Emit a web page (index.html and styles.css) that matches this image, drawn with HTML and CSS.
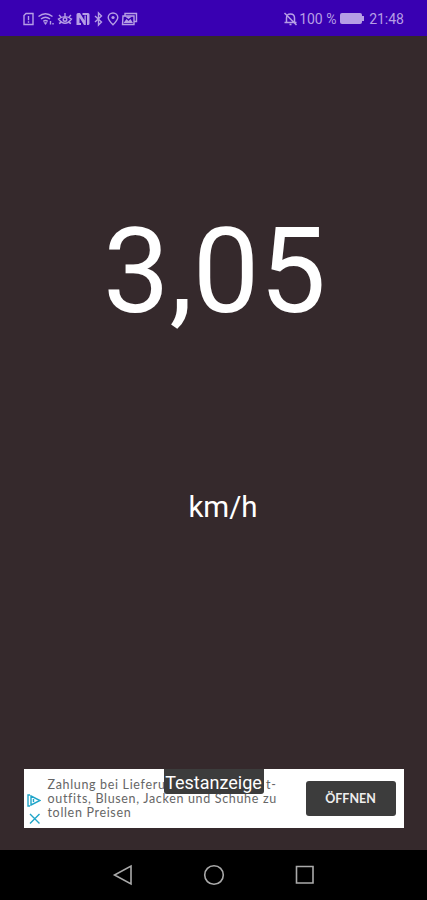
FILE: index.html
```
<!DOCTYPE html>
<html lang="de">
<head>
<meta charset="UTF-8">
<meta name="viewport" content="width=device-width, initial-scale=1.0">
<title>Tacho</title>
<link rel="stylesheet" href="styles.css">
</head>
<body>

<div class="screen">
  <header class="statusbar">
    <svg class="status-icons" width="116" height="16" viewBox="0 0 116 16">
      <!-- sim -->
      <path d="M4 2.500h7v11H2V4.500z"/>
      <path d="M6.500 5v4.200M6.500 10.300v1.500"/>
      <!-- wifi -->
      <path d="M16.500 5.500q7-5.500 14 0M19 8q4.500-3.500 9 0M21.300 10.300q2.200-1.500 4.400 0"/>
      <path class="fill" d="M21.500 11.300h4l-2 2.700z"/>
      <path d="M28.500 10v3.500M31 12v1.500"/>
      <!-- eye -->
      <path d="M36.500 8q6.500-4.800 13 0-6.500 8.500-13 0zM37 4l2 2M43 2v3M49 4l-2 2M37 12.500l2-1M49 12.500l-2-1"/>
      <circle cx="43" cy="8.500" r="1.800"/>
      <!-- nfc -->
      <path class="fill" d="M54.500 3.500Q54.500 2 56 2h2l4.500 7.500V4.500h1.300V14h-1.800L57.500 6.500V12h1.500v2h-4.500z"/>
      <path class="fill" d="M60.500 2H66q1.500 0 1.500 1.500v9q0 1.500-1.500 1.500h-1V4h-4.500z"/>
      <!-- bluetooth -->
      <path d="M73 5l6.500 6-3 3V2l3 3-6.500 6"/>
      <!-- location -->
      <path d="M91 13.800q-4.800-4.800-4.800-7.300a4.800 4.500 0 0 1 9.600 0q0 2.500-4.800 7.300z"/>
      <circle class="fill" cx="91" cy="6.500" r="1.600"/>
      <!-- gallery -->
      <path d="M103 4.500V2.500h11.500v8h-2M101 5h11v8.500H100.500z"/>
      <path class="fill" d="M101.500 12l3-4 2 2 2-2 2.500 4zM103 5.500h7l-3.500 2.500z"/>
    </svg>
    <div class="status-right">
      <svg class="bell" width="15" height="16" viewBox="0 0 15 16">
        <path d="M3.500 11.500V7q0-4 4-4t4 4v4.500M1.500 11.500h12M6.500 13.500h2M1.500 2l12 12"/>
      </svg>
      <span class="percent">100 %</span>
      <span class="battery"></span>
      <span class="clock">21:48</span>
    </div>
  </header>

  <main class="content">
    <div class="speed">3,05</div>
    <div class="unit">km/h</div>

    <div class="ad">
      <svg class="ad-icons" width="15" height="36" viewBox="0 0 15 36">
        <path d="M4 3H2v11h2M5 4v9l9-4.500zM7.500 7v3"/>
        <path d="M4 22l9.500 9.500M13.500 22L4 31.500"/>
      </svg>
      <p class="ad-text">
        <span class="line first"><span>Zahlung bei Lieferu</span><span>t-</span></span>
        <span class="line">outfits, Blusen, Jacken und Schuhe zu</span>
        <span class="line">tollen Preisen</span>
      </p>
      <button class="ad-button">ÖFFNEN</button>
      <span class="ad-label">Testanzeige</span>
    </div>
  </main>

  <nav class="navbar">
    <svg width="22" height="22" viewBox="0 0 22 22"><path d="M19 2v18L2.500 11z"/></svg>
    <svg width="22" height="22" viewBox="0 0 22 22"><circle cx="11" cy="11" r="9.300"/></svg>
    <svg width="22" height="22" viewBox="0 0 22 22"><path d="M2.500 2.500h16.500v16.500H2.500z"/></svg>
  </nav>
</div>

</body>
</html>
```
FILE: styles.css
```
* { box-sizing: border-box; }
body { margin: 0; background-color: #35292c; font-family: Roboto, "Liberation Sans", sans-serif; }
svg { display: block; fill: none; stroke: currentColor; }
.fill { fill: currentColor; stroke: none; }
.screen { display: flex; flex-direction: column; width: 427px; height: 900px; overflow: hidden; }

.statusbar {
  display: flex;
  justify-content: space-between;
  align-items: center;
  height: 36px;
  padding: 1px 23px 0 22px;
  background-color: #3900b2;
  color: #b69ee5;
}
.status-icons { stroke-width: 1.400; }
.status-right { display: flex; align-items: center; font-size: 14px; line-height: 16px; }
.bell { margin-right: 1px; stroke-width: 1.500; }
.percent { width: 38px; white-space: nowrap; }
.battery { position: relative; width: 22px; height: 11px; margin: 0 7px 0 3px; background-color: #b69ee5; border-radius: 2px; }
.battery::after { content: ""; position: absolute; right: -2px; top: 3px; width: 2px; height: 5px; background-color: #b69ee5; }

.content {
  display: flex;
  flex-direction: column;
  align-items: center;
  flex: 1;
  color: #fff;
}
.speed { margin-top: 165px; padding-left: 2px; font-size: 118.500px; line-height: 142px; }
.unit { margin-top: 146px; padding-left: 19px; font-size: 29.500px; line-height: 36px; }

.ad {
  position: relative;
  display: flex;
  align-items: center;
  width: 380px;
  height: 59px;
  margin: auto 0 22px;
  padding: 0 8px 0 2px;
  background-color: #fff;
}
.ad-icons { align-self: flex-end; color: #20a5c9; stroke-width: 1.400; }
.ad-text { flex: 1; margin: 1px 0 0 7px; color: #666; font-family: Lato, sans-serif; font-size: 12.500px; line-height: 14px; letter-spacing: 0.670px; }
.line { display: block; white-space: nowrap; }
.first { display: flex; justify-content: space-between; width: 229px; }
.ad-button {
  width: 90px;
  height: 35px;
  padding: 0;
  border: 0;
  border-radius: 3px;
  background-color: #3c3c3c;
  color: #eee;
  font: bold 12.500px Lato, sans-serif;
}
.ad-label {
  position: absolute;
  top: 0;
  left: 140px;
  width: 100px;
  height: 25px;
  border-radius: 0 0 3px 3px;
  background-color: #3c3c3c;
  font-size: 18px;
  line-height: 27px;
  text-align: center;
}

.navbar {
  display: flex;
  justify-content: center;
  align-items: center;
  gap: 69px;
  height: 50px;
  background-color: #000;
  color: #aaa;
  stroke-width: 1.600;
}
```
